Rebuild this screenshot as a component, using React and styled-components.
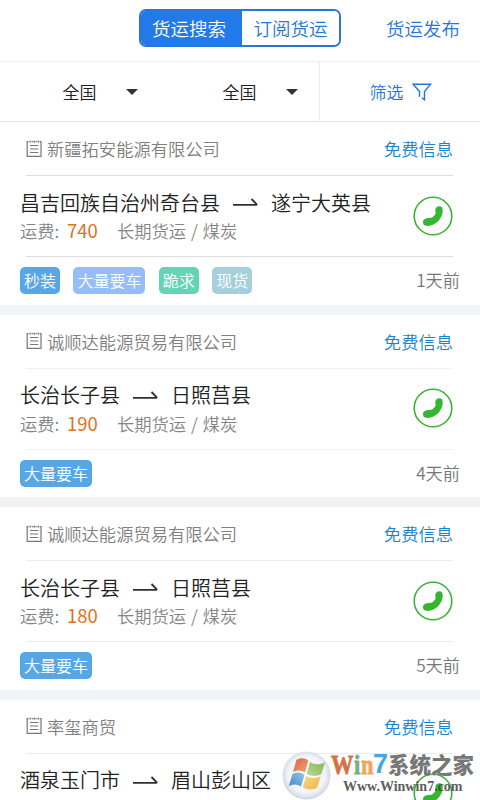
import React from "react";
import styled, { createGlobalStyle } from "styled-components";

// Data
const shipments = [
  {
    id: 1,
    company: "新疆拓安能源有限公司",
    from: "昌吉回族自治州奇台县",
    to: "遂宁大英县",
    price: "740",
    cargo: "长期货运 / 煤炭",
    tags: [
      { text: "秒装", color: "#57a7e7" },
      { text: "大量要车", color: "#96bdfb" },
      { text: "跪求", color: "#63d5b5" },
      { text: "现货", color: "#a6cfdd" },
    ],
    time: "1天前",
    line: "#dcdcdc",
    gap: "#f3f4f7",
  },
  {
    id: 2,
    company: "诚顺达能源贸易有限公司",
    from: "长治长子县",
    to: "日照莒县",
    price: "190",
    cargo: "长期货运 / 煤炭",
    tags: [{ text: "大量要车", color: "#57a7e7" }],
    time: "4天前",
    line: "#f1f1f1",
    gap: "#f2f2f3",
  },
  {
    id: 3,
    company: "诚顺达能源贸易有限公司",
    from: "长治长子县",
    to: "日照莒县",
    price: "180",
    cargo: "长期货运 / 煤炭",
    tags: [{ text: "大量要车", color: "#57a7e7" }],
    time: "5天前",
    line: "#ececec",
    gap: "#f1f3f6",
  },
  {
    id: 4,
    company: "率玺商贸",
    from: "酒泉玉门市",
    to: "眉山彭山区",
    line: "#ececec",
    gap: "#f1f3f6",
  },
];

const NoteIcon = () => (
  <svg width="16" height="18" viewBox="0 0 16 18" fill="none" stroke="#777" strokeWidth="1.2">
    <path d="M2.6 1.6H1.2v14.8H15V1.6h-1.4M5.6 1.6h1.6M9.4 1.6h1.4" />
    <path d="M4.2.5v2.3M8.3.5v2.3M12.2.5v2.3M4 5.5h8.3M4 9h8.3M4 12.5h8.3" />
  </svg>
);

const ArrowIcon = () => (
  <svg width="25" height="12" viewBox="0 0 25 12" fill="none" stroke="#303030" strokeWidth="1.8">
    <path d="M0 8.9h24M18.5 3l5.7 5.900" />
  </svg>
);

const FunnelIcon = () => (
  <svg width="20" height="18" viewBox="0 0 20 18" fill="none" stroke="#2876d2" strokeWidth="1.4">
    <path d="M7.5 13.8V8.500L1.2 1.2h17.400L12.500 8.500v8.300L9.800 14.800" />
  </svg>
);

const PhoneIcon = () => (
  <svg width="40" height="40" viewBox="0 0 40 40">
    <circle cx="20" cy="20" r="18.8" fill="none" stroke="#3eb13a" strokeWidth="1.6" />
    <path
      d="M23.600 11.200C25.300 9.500 28.400 9.900 29.400 12C30.600 17 28.200 22.200 24.800 25.600C21.200 29.100 16 30.700 12 29.500C9.600 28.300 9.400 24.600 11.400 23.200C13 22.200 15 21.800 16.800 21.900C18.600 21.900 19.500 21.200 20.500 20.200C21.700 19 22.500 18.300 22.600 17C22.200 15 22 12.900 23.600 11.200Z"
      fill="#36b52f"
    />
  </svg>
);

const WindowsLogo = () => (
  <svg width="49" height="49" viewBox="0 0 49 49">
    <defs>
      <radialGradient id="orb" cx="50%" cy="48%" r="51%">
        <stop offset="0" stopColor="#fff" />
        <stop offset=".75" stopColor="#f1f4f8" />
        <stop offset=".93" stopColor="#dbe1e8" />
        <stop offset="1" stopColor="#ccd4dd" />
      </radialGradient>
      <linearGradient id="red" x1="0" y1="0" x2="1" y2="1">
        <stop offset="0" stopColor="#db6238" />
        <stop offset="1" stopColor="#efa57e" />
      </linearGradient>
      <linearGradient id="green" x1="1" y1="0" x2="0" y2="1">
        <stop offset="0" stopColor="#83b751" />
        <stop offset="1" stopColor="#bcd994" />
      </linearGradient>
      <linearGradient id="blue" x1="0" y1="1" x2="1" y2="0">
        <stop offset="0" stopColor="#4589c4" />
        <stop offset="1" stopColor="#93c8ec" />
      </linearGradient>
      <linearGradient id="yellow" x1="1" y1="1" x2="0" y2="0">
        <stop offset="0" stopColor="#efb23e" />
        <stop offset="1" stopColor="#fadc8e" />
      </linearGradient>
    </defs>
    <circle cx="24.5" cy="24.5" r="24" fill="url(#orb)" />
    <path d="M14.5 8.8C18.5 6.5 22.5 6.5 26.3 9.5L23 21.5C19 19 15 18.8 11 21Z" fill="url(#red)" />
    <path d="M28 11C32.5 13.8 37.5 14 43 11.2L39.3 23.3C34.5 25.7 29.5 25.5 24.7 22.7Z" fill="url(#green)" />
    <path d="M10.5 23C14.5 20.8 18.5 21 22.5 23.7L19 35.5C15 33 11 32.8 6.8 35Z" fill="url(#blue)" />
    <path d="M24.2 24.8C28.7 27.5 33.5 27.8 38.7 25.3L35 36.7C30 39.3 25.2 38.8 20.7 36.2Z" fill="url(#yellow)" />
  </svg>
);

const Shipment = ({ item }) => (
  <StlCard $gap={item.gap}>
    <StlCompany>
      <NoteIcon />
      <span>{item.company}</span>
      <StlFree>免费信息</StlFree>
    </StlCompany>
    <StlLine $color={item.line} />
    <StlBody>
      <StlTrip>
        <StlRoute>
          {item.from}
          <ArrowIcon />
          {item.to}
        </StlRoute>
        {item.price && (
          <StlFee>
            <span>运费:</span>
            <strong>{item.price}</strong>
            <span>{item.cargo}</span>
          </StlFee>
        )}
      </StlTrip>
      <StlCall aria-label="电话">
        <PhoneIcon />
      </StlCall>
    </StlBody>
    <StlLine $color={item.line} />
    {item.tags && (
      <StlFooter>
        {item.tags.map((tag) => (
          <StlTag key={tag.text} $color={tag.color}>
            {tag.text}
          </StlTag>
        ))}
        <StlTime>{item.time}</StlTime>
      </StlFooter>
    )}
  </StlCard>
);

const App = () => {
  return (
    <>
      <GlobalStyle />
      <StlPage>
        <StlHeader>
          <StlTabs>
            <StlTab $active>货运搜索</StlTab>
            <StlTab>订阅货运</StlTab>
          </StlTabs>
          <StlPublish>货运发布</StlPublish>
        </StlHeader>
        <StlFilters>
          <StlSelect>全国</StlSelect>
          <StlSelect>全国</StlSelect>
          <StlFilter>
            筛选
            <FunnelIcon />
          </StlFilter>
        </StlFilters>
        {shipments.map((item) => (
          <Shipment key={item.id} item={item} />
        ))}
        <StlWatermark>
          <WindowsLogo />
          <div>
            <StlBrandName>
              <StlLetter $color="#d9703f" $width="23px">W</StlLetter>
              <StlLetter $color="#72b08a" $width="7px">i</StlLetter>
              <StlLetter $color="#eda65c" $width="12px">n</StlLetter>
              <StlSeven>7</StlSeven>
              <StlBrandCn>系统之家</StlBrandCn>
            </StlBrandName>
            <StlUrl>Www.Winwin7.com</StlUrl>
          </div>
        </StlWatermark>
      </StlPage>
    </>
  );
};

const GlobalStyle = createGlobalStyle`
  * {
    box-sizing: border-box;
  }
  body {
    margin: 0;
    overflow: hidden;
    background: #fff;
    font-family: "Noto Sans CJK SC", sans-serif;
    font-weight: 350;
  }
  button {
    border: 0;
    padding: 0;
    background: none;
    font: inherit;
    color: inherit;
  }
  svg {
    display: block;
    flex: none;
  }
`;

const StlPage = styled.div`
  position: relative;
  width: 480px;
  height: 800px;
  overflow: hidden;
  background: #fff;
  white-space: nowrap;
`;

const StlHeader = styled.header`
  display: flex;
  justify-content: space-between;
  height: 62px;
  padding: 9px 20px 0 139px;
  border-bottom: 1px solid #f0f0f0;
`;

const StlTabs = styled.div`
  display: flex;
  width: 202px;
  height: 38px;
  border: 2px solid #2876dc;
  border-radius: 7px;
  overflow: hidden;
`;

const StlTab = styled.button`
  width: ${({ $active }) => ($active ? "101px" : "97px")};
  padding-right: ${({ $active }) => ($active ? "5px" : "0")};
  line-height: 34px;
  font-size: 18.5px;
  color: ${({ $active }) => ($active ? "#fff" : "#2876d2")};
  background: ${({ $active }) => ($active ? "#2179ea" : "#fff")};
`;

const StlPublish = styled.button`
  height: 37px;
  font-size: 18.5px;
  color: #2876d2;
`;

const StlFilters = styled.div`
  display: grid;
  grid-template-columns: 160px 159px 161px;
  height: 60px;
  border-bottom: 1px solid #e4e4e4;
  font-size: 17px;
`;

const StlSelect = styled.button`
  display: flex;
  align-items: center;
  gap: 29px;
  padding-left: 62.5px;
  color: #222;

  &::after {
    content: "";
    border: 6px solid transparent;
    border-top-color: #333;
    border-bottom: 0;
  }
`;

const StlFilter = styled.button`
  display: flex;
  align-items: center;
  gap: 8px;
  padding-left: 49.5px;
  border-left: 1px solid #ececec;
  color: #2876d2;
`;

const StlCard = styled.article`
  height: 192.5px;
  border-bottom: 10.5px solid ${({ $gap }) => $gap};
`;

const StlCompany = styled.div`
  display: flex;
  align-items: center;
  gap: 5px;
  height: 53px;
  padding: 0 27px 0 26px;
  font-size: 17.3px;
  color: #808080;
`;

const StlFree = styled.span`
  margin-left: auto;
  color: #1684d5;
`;

const StlLine = styled.div`
  height: 1px;
  margin: 0 27px 0 26px;
  background: ${({ $color }) => $color};
`;

const StlBody = styled.div`
  display: flex;
  justify-content: space-between;
  align-items: center;
  height: 80px;
  padding: 0 27px 0 20px;
`;

const StlTrip = styled.div`
  height: 58px;
`;

const StlRoute = styled.div`
  display: flex;
  align-items: center;
  gap: 13px;
  height: 30px;
  font-size: 20px;
  color: #222;
`;

const StlFee = styled.div`
  display: flex;
  height: 28px;
  line-height: 27px;
  font-size: 17.3px;
  word-spacing: 1px;
  color: #858585;

  strong {
    width: 50px;
    margin-left: 7px;
    font-size: 18.5px;
    font-weight: 400;
    color: #e2701a;
  }
  span:first-child {
    width: 40px;
  }
`;

const StlCall = styled.button`
  width: 40px;
  height: 40px;
  margin-bottom: 1px;
`;

const StlFooter = styled.div`
  display: flex;
  align-items: center;
  gap: 13.4px;
  height: 47px;
  padding: 0 20px;
`;

const StlTag = styled.span`
  height: 27px;
  padding: 0 4px;
  border-radius: 5px;
  line-height: 26px;
  font-size: 16px;
  color: #fff;
  background: ${({ $color }) => $color};
`;

const StlTime = styled.span`
  margin-left: auto;
  line-height: 24px;
  padding-bottom: 1px;
  font-size: 17.2px;
  color: #777;
`;

const StlWatermark = styled.div`
  position: absolute;
  left: 282px;
  top: 751px;
  display: flex;
`;

const StlBrandName = styled.div`
  display: flex;
  height: 28px;
  line-height: 27px;
`;

const StlLetter = styled.span`
  width: ${({ $width }) => $width};
  font-family: "Liberation Serif", serif;
  font-size: 28px;
  font-weight: 700;
  color: ${({ $color }) => $color};
  -webkit-text-stroke: 0.8px ${({ $color }) => $color};
  transform: scaleX(0.8);
  transform-origin: left;
`;

const StlSeven = styled.span`
  width: 15px;
  font-family: "Liberation Sans", sans-serif;
  font-size: 27px;
  font-weight: 700;
  color: #46a6df;
`;

const StlBrandCn = styled.span`
  line-height: 26px;
  font-size: 21.5px;
  font-weight: 900;
  color: #777;
`;

const StlUrl = styled.div`
  margin-left: 12px;
  line-height: 15px;
  font-family: "Liberation Serif", serif;
  font-size: 14px;
  font-weight: 700;
  color: #444;
  opacity: 0.85;
`;

export default App;
